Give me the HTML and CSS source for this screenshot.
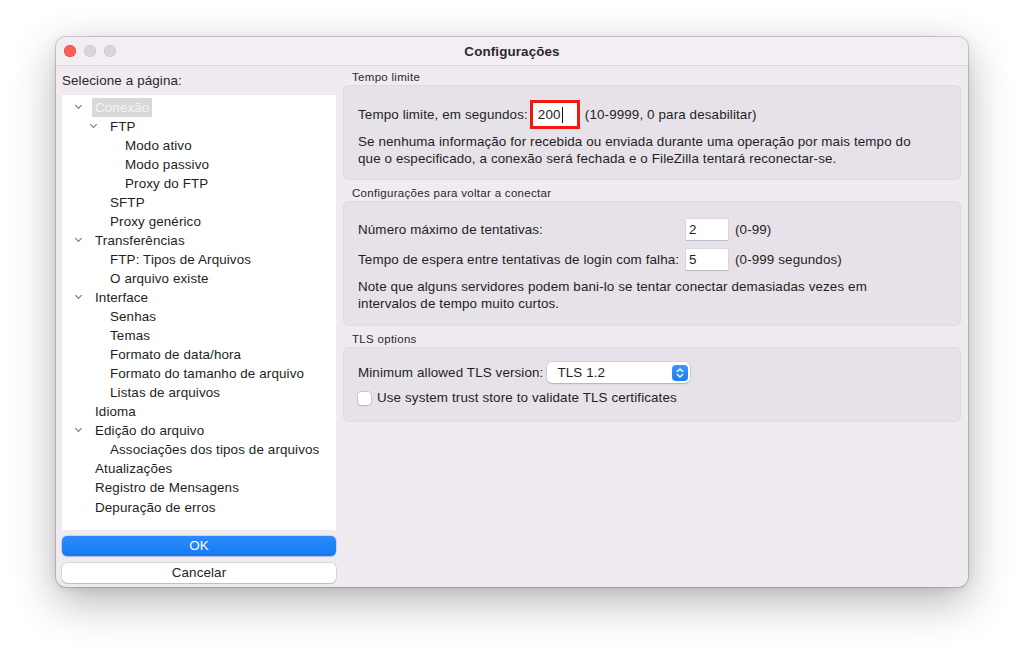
FILE: index.html
```html
<!DOCTYPE html>
<html lang="pt">
<head>
<meta charset="utf-8">
<title>Configurações</title>
<link rel="stylesheet" href="styles.css">
</head>
<body>
<div class="page">
  <div class="window">
    <div class="titlebar">
      <div class="lights">
        <span class="light red"></span>
        <span class="light gray"></span>
        <span class="light gray"></span>
      </div>
      <div class="title">Configurações</div>
    </div>
    <div class="content">
      <div class="left">
        <div class="select-label">Selecione a página:</div>
        <ul class="tree">
          <li class="l0 open"><span class="chev"></span><span class="item selected">Conexão</span></li>
          <li class="l1 open"><span class="chev"></span><span class="item">FTP</span></li>
          <li class="l2"><span class="item">Modo ativo</span></li>
          <li class="l2"><span class="item">Modo passivo</span></li>
          <li class="l2"><span class="item">Proxy do FTP</span></li>
          <li class="l1"><span class="item">SFTP</span></li>
          <li class="l1"><span class="item">Proxy genérico</span></li>
          <li class="l0 open"><span class="chev"></span><span class="item">Transferências</span></li>
          <li class="l1"><span class="item">FTP: Tipos de Arquivos</span></li>
          <li class="l1"><span class="item">O arquivo existe</span></li>
          <li class="l0 open"><span class="chev"></span><span class="item">Interface</span></li>
          <li class="l1"><span class="item">Senhas</span></li>
          <li class="l1"><span class="item">Temas</span></li>
          <li class="l1"><span class="item">Formato de data/hora</span></li>
          <li class="l1"><span class="item">Formato do tamanho de arquivo</span></li>
          <li class="l1"><span class="item">Listas de arquivos</span></li>
          <li class="l0"><span class="item">Idioma</span></li>
          <li class="l0 open"><span class="chev"></span><span class="item">Edição do arquivo</span></li>
          <li class="l1"><span class="item">Associações dos tipos de arquivos</span></li>
          <li class="l0"><span class="item">Atualizações</span></li>
          <li class="l0"><span class="item">Registro de Mensagens</span></li>
          <li class="l0"><span class="item">Depuração de erros</span></li>
        </ul>
        <button class="btn primary">OK</button>
        <button class="btn">Cancelar</button>
      </div>
      <div class="right">
        <div class="group-label">Tempo limite</div>
        <div class="group g1">
          <div class="row">
            <span>Tempo limite, em segundos:</span>
            <span class="highlight"><span class="field wide">200<span class="caret"></span></span></span>
            <span class="hint">(10-9999, 0 para desabilitar)</span>
          </div>
          <p class="para">Se nenhuma informação for recebida ou enviada durante uma operação por mais tempo do que o especificado, a conexão será fechada e o FileZilla tentará reconectar-se.</p>
        </div>

        <div class="group-label">Configurações para voltar a conectar</div>
        <div class="group g2">
          <div class="grid">
            <span>Número máximo de tentativas:</span>
            <span class="field">2</span>
            <span>(0-99)</span>
            <span>Tempo de espera entre tentativas de login com falha:</span>
            <span class="field">5</span>
            <span>(0-999 segundos)</span>
          </div>
          <p class="para">Note que alguns servidores podem bani-lo se tentar conectar demasiadas vezes em intervalos de tempo muito curtos.</p>
        </div>

        <div class="group-label">TLS options</div>
        <div class="group g3">
          <div class="row tls">
            <span>Minimum allowed TLS version:</span>
            <span class="popup">
              <span class="popup-text">TLS 1.2</span>
              <span class="stepper">
                <svg width="16" height="16" viewBox="0 0 16 16"><path d="M5.3 6.5 L8 3.9 L10.7 6.5" fill="none" stroke="#fff" stroke-width="1.4" stroke-linecap="round" stroke-linejoin="round"/><path d="M5.3 9.5 L8 12.1 L10.7 9.5" fill="none" stroke="#fff" stroke-width="1.4" stroke-linecap="round" stroke-linejoin="round"/></svg>
              </span>
            </span>
          </div>
          <label class="check"><span class="box"></span>Use system trust store to validate TLS certificates</label>
        </div>
      </div>
    </div>
  </div>
</div>
</body>
</html>
```

FILE: styles.css
```css
* { box-sizing: border-box; }
html, body { margin: 0; padding: 0; background: #ffffff; }
body {
  font-family: "Liberation Sans", Arial, sans-serif;
  font-size: 13.4px;
  letter-spacing: 0.12px;
  color: #221f22;
  width: 1024px;
  height: 662px;
  overflow: hidden;
}
.page { padding: 37px 56px 0 56px; }
.window {
  width: 912px;
  height: 550px;
  background: #f0eaf1;
  border-radius: 10px;
  box-shadow: 0 0 0 1px rgba(0,0,0,0.16), 0 14px 44px rgba(0,0,0,0.30), 0 2px 8px rgba(0,0,0,0.08);
  overflow: hidden;
  display: flex;
  flex-direction: column;
}
.titlebar {
  height: 29px;
  flex: none;
  background: #f3eef4;
  border-bottom: 1px solid #dcd6dd;
  display: flex;
  align-items: center;
  position: relative;
}
.lights { display: flex; gap: 8px; padding-left: 8px; }
.light { width: 12px; height: 12px; border-radius: 50%; display: block; }
.light.red { background: #fe5f57; box-shadow: inset 0 0 0 0.5px #e14640; }
.light.gray { background: #d9d3da; box-shadow: inset 0 0 0 0.5px #c9c3ca; }
.title {
  position: absolute;
  left: 0; right: 0; top: 0; bottom: 0;
  display: flex; align-items: center; justify-content: center;
  font-weight: bold;
  font-size: 13.4px;
  color: #2c282c;
  pointer-events: none;
}
.content { display: flex; flex: 1; min-height: 0; }
.left {
  width: 280px;
  padding: 7px 0 0 6px;
  display: flex;
  flex-direction: column;
}
.select-label { line-height: 16px; height: 22px; color: #2a262a; }
.tree {
  list-style: none;
  margin: 0;
  padding: 2.5px 0 0 0;
  background: #ffffff;
  height: 435px;
  width: 274px;
}
.tree li {
  height: 19.05px;
  display: flex;
  align-items: center;
  position: relative;
}
.tree li.l0 { padding-left: 33px; }
.tree li.l1 { padding-left: 48px; }
.tree li.l2 { padding-left: 63px; }
.item { line-height: 19px; padding: 0 3px; margin-left: -3px; white-space: nowrap; }
.item.selected { background: #d8d8d8; color: #f4f4f4; height: 19px; }
.chev {
  position: absolute;
  width: 5px; height: 5px;
  border-right: 1.3px solid #747074;
  border-bottom: 1.3px solid #747074;
  transform: rotate(45deg);
  top: 5px;
}
.l0 .chev { left: 14px; }
.l1 .chev { left: 29px; }
.btn {
  font-family: inherit;
  font-size: 13.4px;
  letter-spacing: 0.12px;
  width: 274px;
  height: 20px;
  border: none;
  border-radius: 5px;
  background: #ffffff;
  color: #262326;
  box-shadow: 0 0 0 0.5px rgba(0,0,0,0.18), 0 1px 1px rgba(0,0,0,0.12);
  padding: 0;
  line-height: 20px;
}
.btn.primary {
  margin-top: 6px;
  margin-bottom: 7px;
  background: linear-gradient(#2b8dfb, #1579f3);
  color: #ffffff;
  box-shadow: 0 0 0 0.5px rgba(0,80,200,0.3), 0 1px 1px rgba(0,0,0,0.12);
}
.right {
  flex: 1;
  padding: 4px 7px 0 7px;
}
.group-label {
  font-size: 11.5px;
  letter-spacing: 0.3px;
  line-height: 14px;
  padding-left: 9px;
  margin-bottom: 1px;
  color: #2a262a;
}
.group {
  background: #e7e2e9;
  border-radius: 6px;
  box-shadow: inset 0 0 0 1px rgba(0,0,0,0.03);
  padding: 0 15px;
  margin-bottom: 6px;
}
.g1 { height: 95px; padding-top: 15px; }
.g2 { height: 125px; padding-top: 18px; }
.g3 { height: 75px; padding-top: 15px; }
.row { display: flex; align-items: center; gap: 6px; white-space: nowrap; }
.row.tls { gap: 3px; }
.g1 .row { height: 29px; gap: 2px; }
.g1 .row .hint { margin-left: 3px; }
.highlight {
  border: 3px solid #f0190e;
  padding: 0;
  display: inline-flex;
}
.field {
  background: #ffffff;
  height: 21px;
  width: 42px;
  display: inline-flex;
  align-items: center;
  padding-left: 3px;
  box-shadow: 0 0 0 0.5px rgba(0,0,0,0.08), 0 1px 1px rgba(0,0,0,0.12);
}
.field.wide { width: 44px; height: 23px; padding-left: 5px; box-shadow: none; }
.caret { display: inline-block; width: 1px; height: 16px; background: #111; margin-left: 1px; }
.para { margin: 4px 0 0 0; line-height: 17px; width: 560px; }
.g2 .para { margin-top: 8px; width: 540px; }
.grid {
  display: grid;
  grid-template-columns: 321px 42px auto;
  column-gap: 7px;
  row-gap: 9px;
  align-items: center;
  white-space: nowrap;
}
.popup {
  position: relative;
  width: 143px;
  height: 21px;
  background: #ffffff;
  border-radius: 5px;
  box-shadow: 0 0 0 0.5px rgba(0,0,0,0.15), 0 1px 1.5px rgba(0,0,0,0.15);
  display: flex;
  align-items: center;
  justify-content: space-between;
  padding: 0 2px 0 10px;
  margin-left: 1px;
}
.stepper {
  width: 16px; height: 16px;
  border-radius: 4px;
  background: linear-gradient(#3a95fb, #1c7df3);
  display: flex;
}
.check {
  display: flex;
  align-items: center;
  gap: 6px;
  margin-top: 7px;
  line-height: 16px;
}
.box {
  width: 13px; height: 13px;
  border-radius: 3px;
  background: #ffffff;
  box-shadow: 0 0 0 0.5px rgba(0,0,0,0.25), 0 1px 1px rgba(0,0,0,0.08);
}
```
